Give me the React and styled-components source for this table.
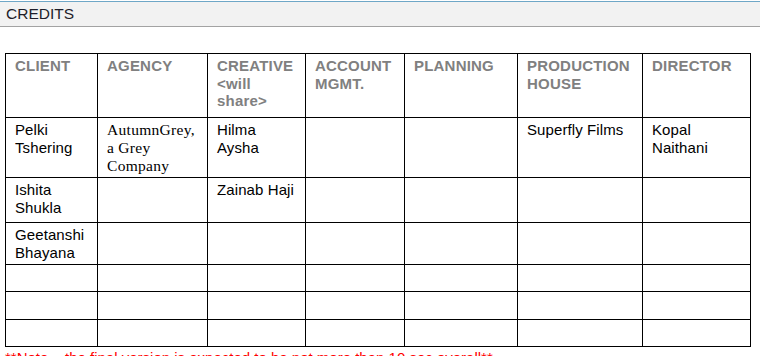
import React from "react";
import styled, { createGlobalStyle } from "styled-components";

const Global = createGlobalStyle`
  html, body { margin: 0; padding: 0; background: #ffffff; }
  body { font-family: "Liberation Sans", Arial, sans-serif; }
`;

const Page = styled.div`
  width: 760px;
  height: 356px;
  overflow: hidden;
  padding-top: 1px;
  box-sizing: border-box;
`;

const TitleBar = styled.div`
  height: 24px;
  background: #f2f2f2;
  border-top: 1px solid #6fa7c7;
  border-bottom: 1px solid #a3a3a3;
  display: flex;
  align-items: center;
  padding-left: 6px;
  font-size: 15.5px;
  color: #1e1e2a;
`;

const Table = styled.table`
  margin: 26px 0 0 5px;
  border-collapse: collapse;
  table-layout: fixed;
  width: 746px;
`;

const Row = styled.tr`
  height: ${(p) => p.$h}px;
`;

const HeadCell = styled.th`
  border: 1px solid #000;
  vertical-align: top;
  text-align: left;
  padding: 3px 9px 0 9px;
  font-size: 15px;
  line-height: 17.5px;
  font-weight: bold;
  color: #808080;
  letter-spacing: 0.2px;
`;

const Cell = styled.td`
  border: 1px solid #000;
  vertical-align: top;
  padding: 3px 9px 0 9px;
  font-size: ${(p) => (p.$serif ? "15.5px" : "15px")};
  line-height: 18px;
  color: #000;
  font-family: ${(p) =>
    p.$serif ? `"Liberation Serif", "Times New Roman", serif` : `"Liberation Sans", Arial, sans-serif`};
  letter-spacing: ${(p) => (p.$serif ? "0.3px" : "0.1px")};
`;

const Note = styled.div`
  margin: 2px 0 0 5px;
  color: #ff0000;
  font-size: 15px;
  line-height: 17px;
  white-space: nowrap;
`;

const widths = [92, 110, 98, 99, 113, 125, 108];
const headers = [
  ["CLIENT"],
  ["AGENCY"],
  ["CREATIVE", "<will", "share>"],
  ["ACCOUNT", "MGMT."],
  ["PLANNING"],
  ["PRODUCTION", "HOUSE"],
  ["DIRECTOR"],
];

const rows = [
  { h: 60, cells: [["Pelki", "Tshering"], ["AutumnGrey,", "a Grey", "Company"], ["Hilma", "Aysha"], [], [], ["Superfly Films"], ["Kopal", "Naithani"]] },
  { h: 45, cells: [["Ishita", "Shukla"], [], ["Zainab Haji"], [], [], [], []] },
  { h: 42, cells: [["Geetanshi", "Bhayana"], [], [], [], [], [], []] },
  { h: 27, cells: [[], [], [], [], [], [], []] },
  { h: 28, cells: [[], [], [], [], [], [], []] },
  { h: 27, cells: [[], [], [], [], [], [], []] },
];

const Lines = ({ lines }) =>
  lines.map((l, i) => (
    <React.Fragment key={i}>
      {i > 0 && <br />}
      {l}
    </React.Fragment>
  ));

export default function App() {
  return (
    <Page>
      <Global />
      <TitleBar>CREDITS</TitleBar>
      <Table>
        <colgroup>
          {widths.map((w, i) => (
            <col key={i} style={{ width: w }} />
          ))}
        </colgroup>
        <thead>
          <Row $h={64}>
            {headers.map((h, i) => (
              <HeadCell key={i}>
                <Lines lines={h} />
              </HeadCell>
            ))}
          </Row>
        </thead>
        <tbody>
          {rows.map((r, ri) => (
            <Row key={ri} $h={r.h}>
              {r.cells.map((c, ci) => (
                <Cell key={ci} $serif={ci === 1}>
                  <Lines lines={c} />
                </Cell>
              ))}
            </Row>
          ))}
        </tbody>
      </Table>
      <Note>**Note – the final version is expected to be not more than 10 sec overall**</Note>
    </Page>
  );
}
